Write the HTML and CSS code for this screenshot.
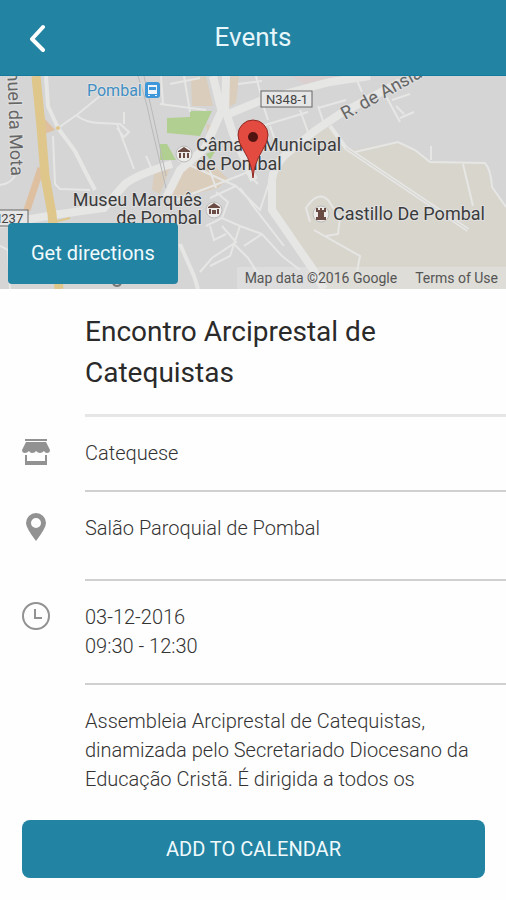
FILE: index.html
```html
<!DOCTYPE html>
<html lang="pt">
<head>
    <meta charset="UTF-8">
    <meta name="viewport" content="width=device-width, initial-scale=1.0">
    <title>Events</title>
    <link rel="stylesheet" href="styles.css">
</head>
<body>

    <header class="top-bar">
        <button class="back-button" type="button" aria-label="Back">
            <svg width="16" height="28" viewBox="0 0 16 28"><path d="M13 3 L2 15 L13 26"/></svg>
        </button>
        <h1>Events</h1>
    </header>

    <section class="map">
        <svg class="map-canvas" viewBox="0 0 506 213" preserveAspectRatio="xMidYMid slice">
            <rect width="506" height="213" fill="#d5d5d5"/>

            <!-- Castle hill, parks and built-up blocks -->
            <path fill="#d8d5cc" d="M330 50 L350 74 L398 66 L415 74 L430 86 L485 87 L492 111 L506 131 V213 H322 L290 160 L273 134 L274 94 L290 74 Z"/>
            <path fill="#b0cf91" d="M167 42 L190 41 L190 35 L212 35 L200 60 L167 57 Z M160 68 H167 L176 84 H160 Z M206 78 L216 74 L210 84 Z"/>
            <path fill="#dacdbc" d="M191 2 L206 0 L213 30 L192 30 Z M228 0 H239 L236 27 L227 32 Z M186 90 L213 88 L228 103 L218 112 L178 122 L168 118 Z M154 98 L170 92 L160 118 L152 114 Z M206 48 L215 50 L208 62 Z"/>
            <path fill="#dccfcf" d="M292 0 H340 L304 8 Z"/>

            <!-- Streets -->
            <g class="street">
                <path d="M58 52 L78 38 L100 20 M76 39 Q86 47 100 47 L120 48 L129 56 L124 61 L117 52 M124 36 V48 M117 48 L134 93 M146 80 L154 98"/>
                <path d="M53 60 L55 108 L60 113 L90 114 M0 109 Q10 108 15 100"/>
                <path d="M160 28 L206 34 M161 0 L163 28 M184 0 L190 36 M170 8 L200 2 M238 8 L262 5 M262 50 L308 36 M270 50 L275 64 M262 26 L268 44 M300 34 L308 56 M256 0 L262 24 M318 30 L324 48 M318 32 L346 24"/>
                <path d="M178 84 L236 110 M176 124 L228 104 L258 92 M206 84 L216 112 M210 122 L236 110 L260 134 L272 98 M240 112 L252 128 M250 100 L258 108"/>
                <path d="M206 150 L222 142 L240 150 L262 158 L282 180 L300 194 M222 142 L228 126 L216 116 M222 150 L236 166 L212 182 L200 196 M240 150 L230 180 L210 190 M234 168 L248 182 L262 204 M210 150 L214 164 L226 158 M262 158 L244 170 M250 126 L284 170"/>
                <path d="M310 146 L306 132 Q318 114 328 124 L340 142 L338 158 L326 160 M314 154 L360 180 L357 196"/>
                <path d="M355 76 L398 66 L415 74 L430 86 L485 87 Q491 94 492 111 L506 131 M463 88 L473 130 M386 20 L400 46 M392 24 L410 18 M400 42 L414 36 M396 30 L404 38 M355 0 L362 16 M431 70 V84"/>
                <path d="M0 170 L8 174 L10 213"/>
            </g>
            <g class="road">
                <path d="M46 0 L48 30 L58 52 L75 75 L85 95 L95 114 M180 168 L194 200 L198 213"/>
                <path d="M330 50 L346 72 L468 154"/>
            </g>
            <g class="avenue">
                <path d="M0 148 L60 138 L104 132 L125 108 Q138 98 172 88 M213 0 L222 37 M226 0 L225 38 M222 34 L205 72 L180 94 L166 122"/>
                <path d="M224 40 L262 24 L330 6 L370 0 M226 36 L233 58 L244 82 L254 104"/>
                <path d="M400 6 L340 38 L316 54 L284 80 Q273 92 272 104 L272 134 L290 160 L312 192 L324 213"/>
            </g>
            <path class="path-edge" d="M346 72 L468 154"/>
            <path class="railway" d="M138 0 Q148 30 150 44 L166 112 M144 0 L154 44 L166 100"/>

            <!-- Main road -->
            <path fill="none" stroke="#dec0a0" stroke-width="7" d="M41 92 L27 134"/>
            <path fill="#dec0a0" d="M44 42 L55 54 L44 58 Z"/>
            <path fill="none" stroke="#dfc68a" stroke-width="9" d="M36 0 L41 50 L45 100 L52 138 L59 213"/>
            <circle cx="58" cy="52" r="2" fill="#dfc68a"/>
            <path fill="none" stroke="#dfc68a" stroke-width="2" d="M54 146 L70 142"/>
            <path fill="none" stroke="#777" stroke-width="2" d="M113 208 Q117 212 121 208"/>

            <!-- Road number plates -->
            <g class="plate">
                <rect x="261" y="15" width="51" height="16"/>
                <text x="266" y="28">N348-1</text>
                <rect x="-14" y="134" width="42" height="16"/>
                <text x="-8" y="147">N237</text>
            </g>

            <!-- Landmarks -->
            <g class="landmark">
                <circle cx="184" cy="78" r="8"/>
                <path d="M178 75 L184 71 L190 75 V76 H178 Z M179 77 H181 V82 H179 Z M183 77 H185 V82 H183 Z M187 77 H189 V82 H187 Z"/>
                <circle cx="214" cy="134" r="8"/>
                <path d="M208 131 L214 127 L220 131 V132 H208 Z M209 133 H211 V138 H209 Z M212 134 H216 V138 H212 Z M217 133 H219 V138 H217 Z"/>
                <circle cx="321" cy="138" r="8"/>
                <path d="M316 132 H318 V134 H320 V132 H322 V134 H324 V132 H326 V136 H324 V141 H326 V144 H316 V141 H318 V136 H316 Z"/>
            </g>
            <rect x="145" y="6" width="15" height="16" rx="3" fill="#3d97d8"/>
            <path fill="#eef4fa" fill-rule="evenodd" d="M148 9 H157 V18 H148 Z M149 11 V14 H156 V11 Z M148 19 H150 V20 H148 Z M155 19 H157 V20 H155 Z"/>

            <g class="label">
                <text class="station" x="87" y="20">Pombal</text>
                <text x="196" y="75">Câmara Municipal</text>
                <text x="196" y="94">de Pombal</text>
                <text x="202" y="130" text-anchor="end">Museu Marquês</text>
                <text x="202" y="148" text-anchor="end">de Pombal</text>
                <text x="333" y="144">Castillo De Pombal</text>
                <text class="street-name" transform="translate(345 44) rotate(-29)">R. de Ansião</text>
                <text class="street-name" text-anchor="end" transform="translate(11 100) rotate(88)">Manuel da Mota</text>
            </g>

            <path fill="#e34b41" stroke="#8f2a24" d="M253 102 Q252 88 244 75 Q238 66 238 59 A15 15 0 0 1 268 59 Q268 66 262 75 Q254 88 253 102 Z"/>
            <circle cx="253" cy="61" r="5" fill="#521411"/>
        </svg>
        <button class="directions-button" type="button">Get directions</button>
        <div class="map-credits">
            <span>Map data ©2016 Google</span>
            <a href="#">Terms of Use</a>
        </div>
    </section>

    <main class="event">
        <div class="row title-row">
            <h2>Encontro Arciprestal de Catequistas</h2>
        </div>
        <div class="row">
            <svg class="icon" viewBox="0 0 28 28">
                <path d="M3 1 H25 V3 H3 Z M4 4 H24 L28 12 Q28 15 25 15 Q23 15 22 13 Q20 15 18 15 Q16 15 14 13 Q13 15 10 15 Q8 15 7 13 Q5 15 3 15 Q0 15 0 12 Z M3 17 H5 V23 H23 V17 H25 V27 H3 Z"/>
            </svg>
            <p>Catequese</p>
        </div>
        <div class="row place-row">
            <svg class="icon" viewBox="0 0 28 28">
                <path fill-rule="evenodd" d="M14 0 A10 10 0 0 1 24 10 Q24 15 14 28 Q4 15 4 10 A10 10 0 0 1 14 0 Z M14 5 A5 5 0 1 0 14 15 A5 5 0 1 0 14 5 Z"/>
            </svg>
            <p>Salão Paroquial de Pombal</p>
        </div>
        <div class="row">
            <svg class="icon icon-clock" viewBox="0 0 28 28">
                <circle cx="14" cy="14" r="13"/>
                <path d="M13 7 V16 H20"/>
            </svg>
            <p>03-12-2016<br>09:30 - 12:30</p>
        </div>
        <div class="row">
            <p>Assembleia Arciprestal de Catequistas, dinamizada pelo Secretariado Diocesano da Educação Cristã. É dirigida a todos os</p>
        </div>
    </main>

    <footer class="bottom-bar">
        <button class="calendar-button" type="button">ADD TO CALENDAR</button>
    </footer>

</body>
</html>
```
FILE: styles.css
```css
* {
    margin: 0;
    padding: 0;
    box-sizing: border-box;
}

body {
    display: flex;
    flex-direction: column;
    min-height: 100vh;
    background: #fefefe;
    font-family: Roboto, "Liberation Sans", sans-serif;
    font-size: 20px;
    line-height: 29px;
    color: #333;
}

button {
    border: none;
    background: #2283a2;
    color: #f0fafd;
    font-family: inherit;
    font-size: 20px;
    cursor: pointer;
}

/* Header */
.top-bar {
    display: grid;
    grid-template-columns: 48px 1fr 48px;
    align-items: center;
    height: 76px;
    padding: 0 14px;
    background: #2283a2;
    border-bottom: 1px solid #137c9e;
}

.top-bar h1 {
    font-size: 26px;
    font-weight: 400;
    text-align: center;
    color: #e6f6fb;
}

.back-button {
    height: 48px;
}

.back-button svg {
    display: block;
    margin: 0 auto;
    fill: none;
    stroke: #fff;
    stroke-width: 4;
    stroke-linecap: round;
    stroke-linejoin: round;
}

/* Map */
.map {
    position: relative;
    height: 213px;
    overflow: hidden;
}

.map-canvas {
    display: block;
    width: 100%;
    height: 100%;
}

.street, .road, .avenue, .path-edge, .railway {
    fill: none;
    stroke: #e6e6e5;
    stroke-width: 2;
}

.road {
    stroke-width: 4;
}

.avenue {
    stroke-width: 8;
}

.path-edge {
    stroke: #d5d3cc;
    stroke-width: 1;
}

.railway {
    stroke: #b9b9b9;
    stroke-width: 1;
}

.plate rect {
    fill: #e6e6e6;
    stroke: #666;
}

.plate text {
    font-size: 13px;
    fill: #444;
}

.landmark circle {
    fill: #eeecea;
    stroke: #bbb;
}

.landmark path {
    fill: #6b4c44;
}

.label text {
    font-size: 18px;
    fill: #3b3b3b;
    stroke: #e0e0e0;
    stroke-width: 2;
    paint-order: stroke;
}

.label .station {
    font-size: 16px;
    fill: #3f8fc4;
}

.label .street-name {
    fill: #666;
}

.directions-button {
    position: absolute;
    left: 8px;
    bottom: 5px;
    padding: 16px 23px;
    border-radius: 4px;
    line-height: 29px;
}

.map-credits {
    position: absolute;
    right: 0;
    bottom: 0;
    display: flex;
    gap: 18px;
    padding: 0 8px;
    background: rgba(232, 232, 232, 0.4);
    font-size: 14px;
    line-height: 22px;
    color: #555;
}

.map-credits a {
    color: inherit;
    text-decoration: none;
}

/* Event details */
.event {
    flex: 1;
}

.row {
    display: grid;
    grid-template-columns: 28px 1fr;
    column-gap: 35px;
    padding-left: 22px;
}

.row h2, .row p {
    grid-column: 2;
    padding: 22px 22px 22px 0;
    border-bottom: 2px solid #d0d0d0;
    font-weight: 300;
}

.row h2 {
    padding-bottom: 21px;
    border-bottom: 3px solid #e6e6e6;
    font-size: 28px;
    font-weight: 400;
    line-height: 41px;
    color: #2a2a2a;
}

.row:last-child p {
    border-bottom: none;
}

.place-row p {
    padding-bottom: 36px;
}

.icon {
    width: 28px;
    height: 28px;
    margin-top: 21px;
    fill: #929292;
}

.icon-clock {
    fill: none;
    stroke: #929292;
    stroke-width: 2;
}

/* Bottom button */
.bottom-bar {
    padding: 0 21px 22px 22px;
}

.calendar-button {
    width: 100%;
    height: 58px;
    border-radius: 8px;
}
```
